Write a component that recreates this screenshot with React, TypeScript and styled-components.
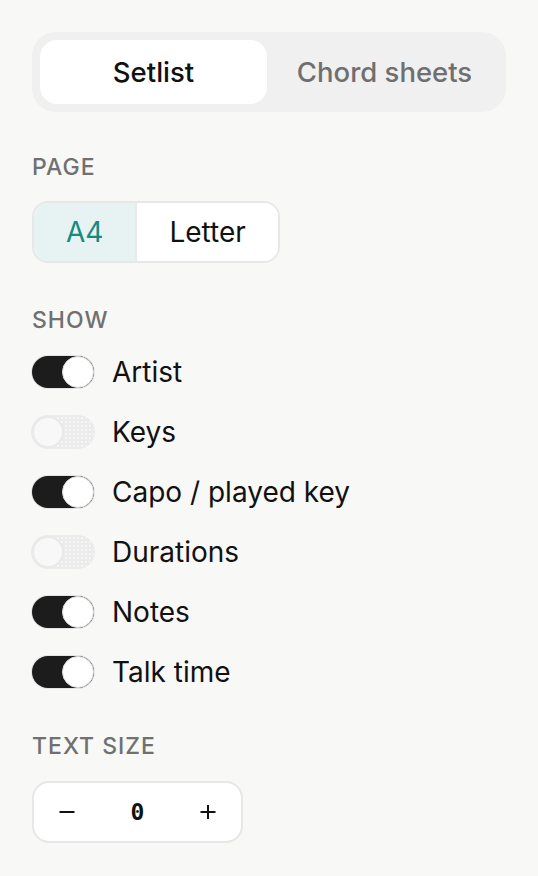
import React, { useState } from "react";
import styled, { createGlobalStyle } from "styled-components";

const Global = createGlobalStyle`
  html, body { margin: 0; padding: 0; background: #f8f8f7; }
  body { font-family: Inter, "Noto Sans", sans-serif; color: #111; -webkit-font-smoothing: antialiased; }
  * { box-sizing: border-box; }
`;

const Panel = styled.div`
  padding: 32px 32px 32px 32px;
  display: flex;
  flex-direction: column;
  width: 538px;
`;

const Tabs = styled.div`
  display: grid;
  grid-template-columns: 1fr 1fr;
  gap: 4px;
  padding: 8px;
  height: 80px;
  width: 474px;
  border-radius: 24px;
  background: #f0f0f0;
`;

const Tab = styled.button<{ $active?: boolean }>`
  border: none;
  font-family: inherit;
  font-size: 27.5px;
  font-weight: 500;
  border-radius: 17px;
  background: ${(p) => (p.$active ? "#ffffff" : "transparent")};
  color: ${(p) => (p.$active ? "#111111" : "#6f6f6f")};
  padding: 0;
  cursor: pointer;
`;

const Section = styled.section<{ $top?: number; $gap?: number }>`
  margin-top: ${(p) => p.$top ?? 44}px;
  display: flex;
  flex-direction: column;
  gap: ${(p) => p.$gap ?? 23}px;
`;

const Label = styled.div`
  font-size: 23px;
  line-height: 22px;
  font-weight: 500;
  letter-spacing: 1px;
  color: #707070;
`;

const Segmented = styled.div`
  display: inline-flex;
  align-self: flex-start;
  height: 62px;
  border: 2px solid #e7e7e7;
  border-radius: 16px;
  background: #ffffff;
  overflow: hidden;
`;

const Segment = styled.button<{ $active?: boolean }>`
  border: none;
  font-family: inherit;
  font-size: 28px;
  font-weight: 400;
  padding: 0 32px;
  background: ${(p) => (p.$active ? "#e6f3f2" : "#ffffff")};
  color: ${(p) => (p.$active ? "#168a80" : "#111111")};
  & + & {
    border-left: 2px solid #e9e9e9;
  }
`;

const ToggleList = styled.div`
  display: flex;
  flex-direction: column;
  gap: 28px;
`;

const Row = styled.label`
  display: flex;
  align-items: center;
  gap: 18px;
  font-size: 28px;
  line-height: 34px;
  height: 32px;
  color: #111;
`;

const Track = styled.span<{ $on: boolean }>`
  position: relative;
  display: inline-block;
  width: 62px;
  height: 32px;
  border-radius: 16px;
  flex: none;
  background-color: ${(p) => (p.$on ? "#1c1c1c" : "#ebebeb")};
  background-image: ${(p) =>
    p.$on ? "none" : "radial-gradient(circle, #f6f6f6 0.7px, transparent 1px)"};
  background-size: 4px 4px;
  box-shadow: 0 0 0 1px ${(p) => (p.$on ? "#e4e4e4" : "#ececec")};
`;

const Knob = styled.span<{ $on: boolean }>`
  position: absolute;
  top: 0;
  left: ${(p) => (p.$on ? "30px" : "0")};
  width: 32px;
  height: 32px;
  border-radius: 50%;
  background: ${(p) => (p.$on ? "#ffffff" : "#f8f8f8")};
  border: ${(p) => (p.$on ? "1px solid #dcdcdc" : "2px solid #e9e9e9")};
`;

const Stepper = styled.div`
  display: flex;
  flex: none;
  align-self: flex-start;
  align-items: center;
  width: 211px;
  height: 62px;
  border: 2px solid #e7e7e7;
  border-radius: 17px;
  background: #ffffff;
`;

const StepButton = styled.button`
  width: 66px;
  flex: none;
  height: 100%;
  border: none;
  background: transparent;
  display: flex;
  align-items: center;
  justify-content: center;
  padding: 0;
  color: #111;
`;

const Value = styled.span`
  flex: 1;
  text-align: center;
  font-family: "DejaVu Sans Mono", "Liberation Mono", monospace;
  font-size: 23px;
  font-weight: 600;
  color: #111;
`;

const Toggle = ({ on }: { on: boolean }) => (
  <Track $on={on}>
    <Knob $on={on} />
  </Track>
);

const Minus = () => (
  <svg width="16" height="16" viewBox="0 0 16 16">
    <line x1="0.5" y1="8" x2="15.5" y2="8" stroke="#111" strokeWidth="2" />
  </svg>
);

const Plus = () => (
  <svg width="16" height="16" viewBox="0 0 16 16">
    <line x1="0.5" y1="8" x2="15.5" y2="8" stroke="#111" strokeWidth="2" />
    <line x1="8" y1="1" x2="8" y2="15" stroke="#111" strokeWidth="2" />
  </svg>
);

const options = [
  { label: "Artist", on: true },
  { label: "Keys", on: false },
  { label: "Capo / played key", on: true },
  { label: "Durations", on: false },
  { label: "Notes", on: true },
  { label: "Talk time", on: true },
];

export default function App() {
  const [size] = useState(0);
  return (
    <>
      <Global />
      <Panel>
        <Tabs>
          <Tab $active>Setlist</Tab>
          <Tab>Chord sheets</Tab>
        </Tabs>

        <Section $top={44} $gap={23}>
          <Label>PAGE</Label>
          <Segmented>
            <Segment $active>A4</Segment>
            <Segment>Letter</Segment>
          </Segmented>
        </Section>

        <Section $top={46} $gap={25}>
          <Label>SHOW</Label>
          <ToggleList>
            {options.map((o) => (
              <Row key={o.label}>
                <Toggle on={o.on} />
                {o.label}
              </Row>
            ))}
          </ToggleList>
        </Section>

        <Section $top={47} $gap={24}>
          <Label>TEXT SIZE</Label>
          <Stepper>
            <StepButton aria-label="Decrease">
              <Minus />
            </StepButton>
            <Value>{size}</Value>
            <StepButton aria-label="Increase">
              <Plus />
            </StepButton>
          </Stepper>
        </Section>
      </Panel>
    </>
  );
}
